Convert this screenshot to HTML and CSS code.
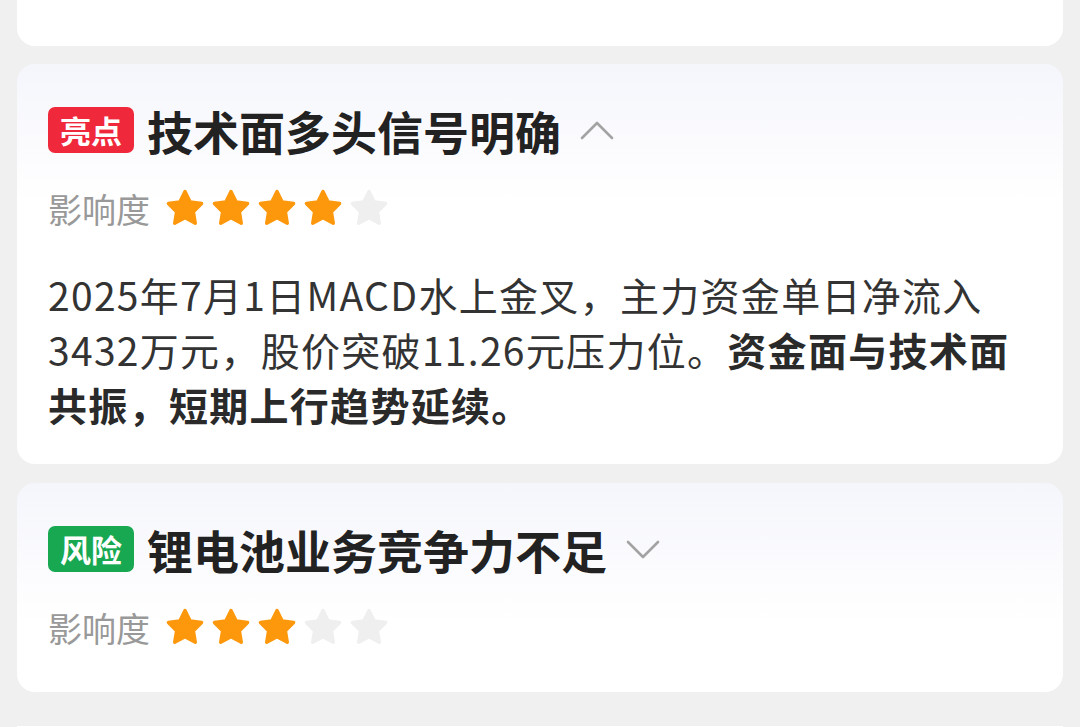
FILE: index.html
```html
<!DOCTYPE html>
<html lang="zh-CN">
<head>
  <meta charset="UTF-8">
  <title>亮点与风险</title>
  <link rel="stylesheet" href="styles.css">
</head>
<body>
  <div class="list">
    <div class="card card-tail"></div>

    <div class="card">
      <div class="head">
        <span class="tag tag-good">亮点</span>
        <span class="title">技术面多头信号明确</span>
        <svg class="chev" width="34" height="20" viewBox="0 0 34 20"><path d="M2 18 L17 3 L32 18" fill="none" stroke="#a3a3a3" stroke-width="2.6" stroke-linecap="round" stroke-linejoin="round"/></svg>
      </div>
      <div class="impact">
        <span class="impact-label">影响度</span>
        <div class="stars" data-score="4"></div>
      </div>
      <p class="desc">2025年7月1日MACD水上金叉，主力资金单日净流入<br>3432万元，股价突破11.26元压力位。<b>资金面与技术面<br>共振，短期上行趋势延续。</b></p>
    </div>

    <div class="card card-closed">
      <div class="head">
        <span class="tag tag-risk">风险</span>
        <span class="title">锂电池业务竞争力不足</span>
        <svg class="chev" width="34" height="20" viewBox="0 0 34 20"><path d="M2 3 L17 18 L32 3" fill="none" stroke="#a3a3a3" stroke-width="2.6" stroke-linecap="round" stroke-linejoin="round"/></svg>
      </div>
      <div class="impact">
        <span class="impact-label">影响度</span>
        <div class="stars" data-score="3"></div>
      </div>
    </div>

    <div class="card card-next"></div>
  </div>

  <script>
    const star = '<svg width="38" height="38" viewBox="0 0 38 38"><path d="M19 2.5 L24.2 12.9 L35.6 14.5 L27.4 22.7 L29.3 34.2 L19 28.8 L8.7 34.2 L10.6 22.7 L2.4 14.5 L13.8 12.9 Z" stroke-width="3.4" stroke-linejoin="round"/></svg>';
    document.querySelectorAll('.stars').forEach(box => {
      const score = parseInt(box.dataset.score);
      let html = '';
      for (let i = 0; i < 5; i++) {
        html += `<span class="star ${i < score ? 'on' : ''}">${star}</span>`;
      }
      box.innerHTML = html;
    });
  </script>
</body>
</html>
```

FILE: styles.css
```css
body {
  margin: 0;
  background: #f0f0f0;
  font-family: "Noto Sans CJK SC", "Noto Sans", sans-serif;
  color: #333;
}

.list {
  display: flex;
  flex-direction: column;
  gap: 18px;
  padding: 0 17px;
}

.card {
  background: linear-gradient(180deg, #f5f6fc 0, #ffffff 140px);
  border-radius: 18px;
  padding: 36px 16px 32px 31px;
}

.card-tail {
  background: #fff;
  height: 46px;
  padding: 0;
  border-radius: 0 0 18px 18px;
}

.card-closed {
  margin-top: 1px;
  padding-bottom: 43px;
}

.card-next {
  background: #fff;
  margin-top: 16px;
  height: 1px;
  padding: 0;
  border-radius: 18px 18px 0 0;
}

.head {
  display: flex;
  align-items: center;
  height: 60px;
}

.tag {
  height: 46px;
  line-height: 46px;
  padding: 0 12px;
  border-radius: 7px;
  color: #fff;
  font-size: 31px;
  font-weight: 700;
}

.tag-good {
  background: #f0283b;
}

.tag-risk {
  background: #17a851;
}

.title {
  margin-left: 13px;
  font-size: 46px;
  font-weight: 700;
  color: #222;
}

.chev {
  margin-left: 19px;
}

.impact {
  display: flex;
  align-items: center;
  height: 44px;
  margin-top: 26px;
}

.impact-label {
  font-size: 34px;
  color: #999;
}

.stars {
  display: flex;
  gap: 8px;
  margin-left: 16px;
}

.star svg {
  display: block;
  overflow: visible;
  fill: #efefef;
  stroke: #efefef;
}

.star.on svg {
  fill: #fd980c;
  stroke: #fd980c;
}

.desc {
  margin: 37px 0 0;
  font-size: 39px;
  line-height: 55px;
  letter-spacing: 1.3px;
  color: #333;
}

.desc b {
  font-weight: 700;
  color: #2a2a2a;
}
```
